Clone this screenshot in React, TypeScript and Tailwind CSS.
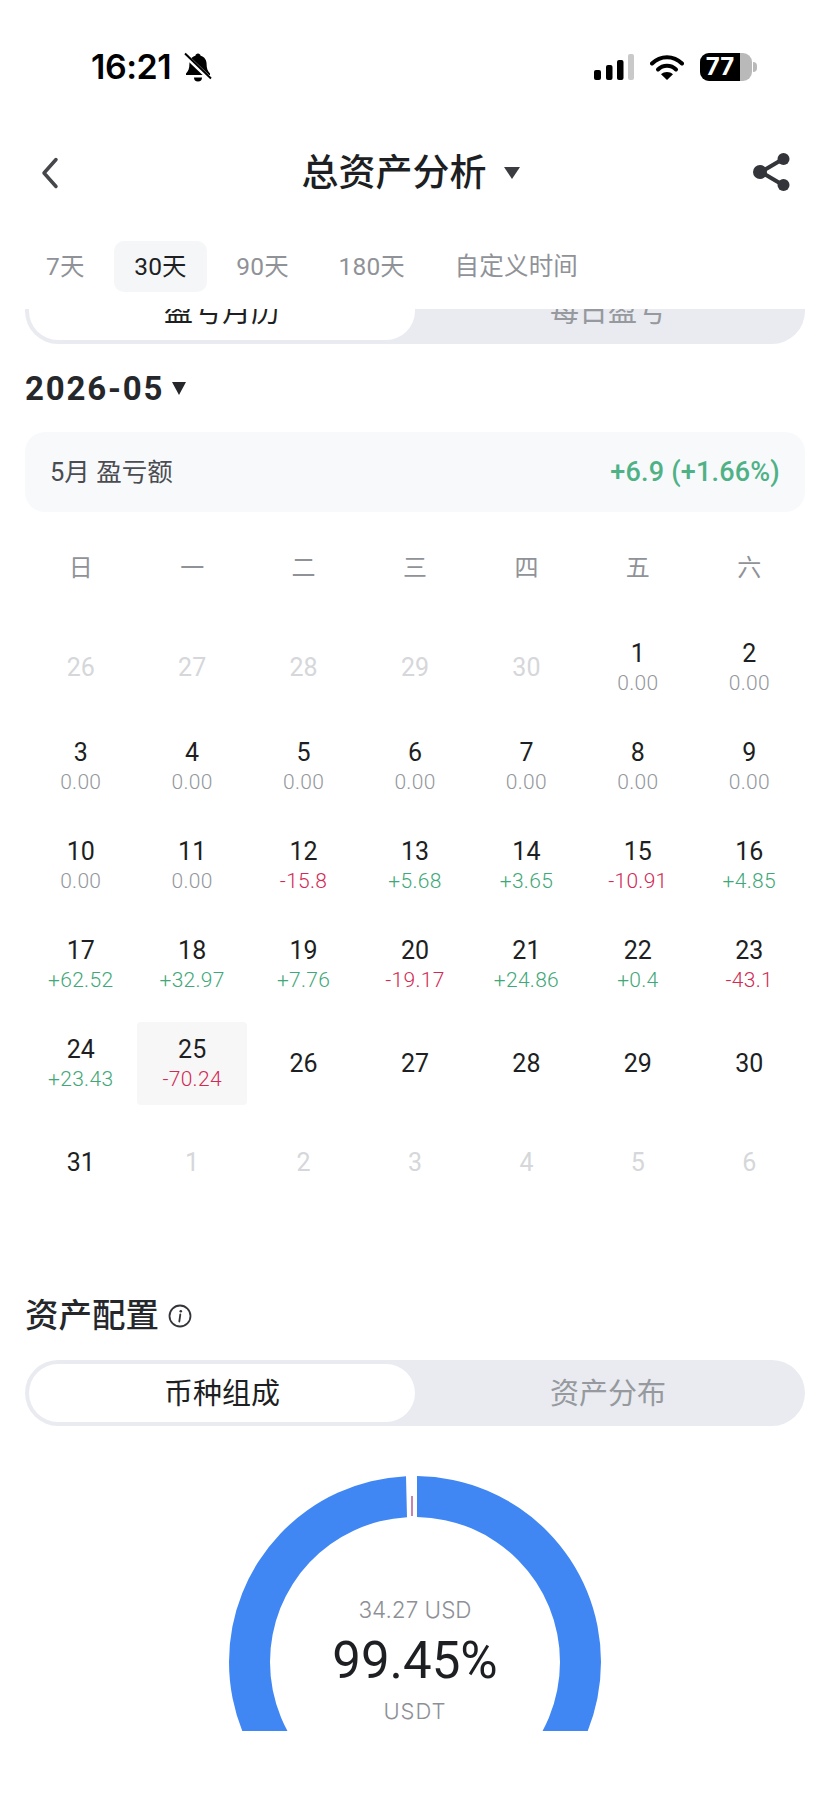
const FONT = "font-['Roboto','Noto_Sans_CJK_SC',sans-serif]";

type Day = { d: number; v?: string; muted?: boolean; today?: boolean };

const zero = (d: number): Day => ({ d, v: '0.00' });

const days: Day[] = [
  { d: 26, muted: true },
  { d: 27, muted: true },
  { d: 28, muted: true },
  { d: 29, muted: true },
  { d: 30, muted: true },
  ...[1, 2, 3, 4, 5, 6, 7, 8, 9, 10, 11].map(zero),
  { d: 12, v: '-15.8' },
  { d: 13, v: '+5.68' },
  { d: 14, v: '+3.65' },
  { d: 15, v: '-10.91' },
  { d: 16, v: '+4.85' },
  { d: 17, v: '+62.52' },
  { d: 18, v: '+32.97' },
  { d: 19, v: '+7.76' },
  { d: 20, v: '-19.17' },
  { d: 21, v: '+24.86' },
  { d: 22, v: '+0.4' },
  { d: 23, v: '-43.1' },
  { d: 24, v: '+23.43' },
  { d: 25, v: '-70.24', today: true },
  { d: 26 },
  { d: 27 },
  { d: 28 },
  { d: 29 },
  { d: 30 },
  { d: 31 },
  { d: 1, muted: true },
  { d: 2, muted: true },
  { d: 3, muted: true },
  { d: 4, muted: true },
  { d: 5, muted: true },
  { d: 6, muted: true },
];

function valueColor(v: string) {
  if (v.startsWith('+')) return 'text-[#3fa878]';
  if (v.startsWith('-')) return 'text-[#d22a54]';
  return 'text-[#94979c]';
}

function StatusBar() {
  return (
    <div className="h-[134px] flex items-center pl-[91px] pr-[73px]">
      <span className="text-[34px] leading-none font-semibold text-black font-['Inter',sans-serif] tracking-[-0.5px]">
        16:21
      </span>
      <svg width="28" height="30" viewBox="0 0 28 30" className="ml-[13px]">
        <path d="M14 1.500c1.400 0 2.400 1 2.600 2.200 4 1.100 6 4.500 6 8.600 0 4.200 1 6.400 3.400 9.200v1.500H2v-1.500c2.400-2.800 3.400-5 3.400-9.200 0-4.100 2-7.500 6-8.600C11.600 2.500 12.600 1.500 14 1.500z" fill="#000" />
        <path d="M10 25.500h8a4 4 0 0 1-8 0z" fill="#000" />
        <path d="M1 3l26 25" stroke="#fff" strokeWidth="4.500" />
        <path d="M1 1.500l26 25" stroke="#000" strokeWidth="2" />
      </svg>
      <div className="ml-auto flex items-center">
        <svg width="40" height="26" viewBox="0 0 40 26">
          <rect x="0" y="16" width="7" height="10" rx="2" fill="#000" />
          <rect x="12" y="11" width="6.500" height="15" rx="2" fill="#000" />
          <rect x="23" y="6" width="6.500" height="20" rx="2" fill="#000" />
          <rect x="34" y="0" width="6" height="26" rx="2" fill="#c9c9c9" />
        </svg>
        <svg width="34" height="26" viewBox="0 0 34 26" className="ml-[16px]">
          <path d="M2 9.500C10.500 1 23.500 1 32 9.500" fill="none" stroke="#000" strokeWidth="4" strokeLinecap="round" />
          <path d="M8 15.500c5-5 13-5 18 0" fill="none" stroke="#000" strokeWidth="4" strokeLinecap="round" />
          <path d="M17 26l-6-5.800c3.400-3 8.600-3 12 0z" fill="#000" />
        </svg>
        <div className="ml-[16px] flex items-center">
          <div className="relative w-[52px] h-[28px] rounded-[9px] overflow-hidden bg-[#b9b9b9]">
            <div className="w-[40px] h-full bg-black flex items-center justify-center">
              <span className="text-[24px] leading-none font-bold text-white font-['Inter',sans-serif]">77</span>
            </div>
          </div>
          <div className="ml-[1px] w-[4px] h-[10px] rounded-r-full bg-[#b9b9b9]" />
        </div>
      </div>
    </div>
  );
}

function NavBar() {
  return (
    <div className="relative h-[76px] flex items-center justify-center">
      <svg width="18" height="32" viewBox="0 0 18 32" className="absolute left-[41px] top-[23px]">
        <path d="M15 2.500L3 16l12 13.500" fill="none" stroke="#45474b" strokeWidth="3.500" strokeLinecap="round" strokeLinejoin="round" />
      </svg>
      <div className="flex items-center pt-[2px] pr-[9px]">
        <span className="text-[37px] leading-none font-medium text-[#1d1f23]">总资产分析</span>
        <span className="ml-[17px] w-0 h-0 border-x-[8.500px] border-x-transparent border-t-[12px] border-t-[#3a3c40]" />
      </div>
      <svg width="40" height="40" viewBox="0 0 40 40" className="absolute left-[752px] top-[18px]">
        <path d="M31 7L9 20l22 13" fill="none" stroke="#33353a" strokeWidth="4" />
        <circle cx="31.500" cy="7" r="6" fill="#33353a" />
        <circle cx="8" cy="20" r="7" fill="#33353a" />
        <circle cx="31.500" cy="33" r="6" fill="#33353a" />
      </svg>
    </div>
  );
}

function RangeTabs() {
  const tabs = ['7天', '30天', '90天', '180天', '自定义时间'];
  return (
    <div className="mt-[31px] h-[51px] flex pl-[26px] gap-[9.500px]">
      {tabs.map((t) => (
        <div
          key={t}
          className={`h-full px-[20px] pt-[2px] flex items-center rounded-[10px] text-[24.500px] leading-none tracking-[0.2px] ${
            t === '30天' ? 'bg-[#f5f6f8] text-[#1d1f23]' : 'text-[#8f9297]'
          }`}
        >
          {t}
        </div>
      ))}
    </div>
  );
}

function Segmented({ left, right }: { left: string; right: string }) {
  return (
    <div className="h-[66px] rounded-full bg-[#e9ebf0] p-[4px] flex">
      <div className="w-[386px] pt-[3px] rounded-full bg-white flex items-center justify-center text-[29px] text-[#1d1f23]">
        {left}
      </div>
      <div className="flex-1 pt-[3px] flex items-center justify-center text-[29px] text-[#96999e]">{right}</div>
    </div>
  );
}

function Calendar() {
  return (
    <>
      <div className="mt-[36px] h-[40px] grid grid-cols-7 items-center text-center text-[24px] text-[#8f9297]">
        {['日', '一', '二', '三', '四', '五', '六'].map((w) => (
          <div key={w}>{w}</div>
        ))}
      </div>
      <div className="mt-[38px] grid grid-cols-7 auto-rows-[83px] gap-y-[16px]">
        {days.map((day, i) => (
          <div
            key={i}
            className={`flex flex-col items-center justify-center ${day.today ? 'bg-[#f7f7f8] rounded-[4px] mx-[1px]' : ''}`}
          >
            <div className={`text-[25px] leading-[30px] ${day.muted ? 'text-[#d5d7da]' : 'text-[#1d1f23]'}`}>{day.d}</div>
            {day.v && (
              <div className={`mt-[1px] mb-[1px] text-[21px] leading-[26px] font-light tracking-[0.3px] ${valueColor(day.v)}`}>
                {day.v}
              </div>
            )}
          </div>
        ))}
      </div>
    </>
  );
}

function Donut() {
  return (
    <div className="relative mt-[50px] h-[255px]">
      <svg width="780" height="255" viewBox="0 0 780 255" className="block">
        {/* ring centre sits at 390,186, cut off flat by the viewBox bottom */}
        <path d="M381 0.220A186 186 0 0 0 204 186A186 186 0 0 0 390 372A186 186 0 0 0 576 186A186 186 0 0 0 392 0.010V41.010A145 145 0 0 1 535 186A145 145 0 0 1 390 331A145 145 0 0 1 245 186A145 145 0 0 1 382 41.220z" fill="#4187f4" />
        <rect x="386.300" y="20" width="1.400" height="20" fill="#b0508f" />
      </svg>
      <div className="absolute left-0 right-0 top-[120px] text-center text-[22.500px] leading-[28px] text-[#8d9096] font-['Inter',sans-serif] font-light">
        34.27 USD
      </div>
      <div className="absolute left-0 right-0 top-[155px] text-center text-[51px] leading-[60px] font-[450] text-[#1d1f23]">
        99.45%
      </div>
      <div className="absolute left-0 right-0 top-[221px] text-center text-[22px] leading-[28px] tracking-[1px] text-[#8d9096] font-['Inter',sans-serif] font-light">
        USDT
      </div>
    </div>
  );
}

export default function App() {
  return (
    <div className={`w-[830px] h-[1802px] bg-white flex flex-col overflow-hidden ${FONT}`}>
      <header className="h-[309px] shrink-0 bg-white relative z-10">
        <StatusBar />
        <NavBar />
        <RangeTabs />
      </header>
      <main className="flex-1 overflow-hidden">
        {/* page is scrolled: the first switch sits partly under the header */}
        <div className="-mt-[31px] px-[25px]">
          <Segmented left="盈亏月历" right="每日盈亏" />

          <div className="mt-[24px] h-[40px] flex items-center">
            <span className="text-[33px] leading-none font-bold text-[#25272b] tracking-[1.800px]">2026-05</span>
            <span className="ml-[8px] w-0 h-0 border-x-[7.500px] border-x-transparent border-t-[13px] border-t-[#25272b]" />
          </div>

          <div className="mt-[24px] h-[80px] rounded-[20px] bg-[#f8f9fb] px-[25px] flex items-center justify-between">
            <span className="text-[25.500px] text-[#4a4c51]">5月 盈亏额</span>
            <span className="text-[27px] font-medium text-[#4fb286] tracking-[0.2px]">+6.9 (+1.66%)</span>
          </div>

          <Calendar />

          <div className="mt-[90px] h-[44px] flex items-center">
            <span className="text-[33.500px] leading-none font-medium text-[#25272b]">资产配置</span>
            <svg width="24" height="24" viewBox="0 0 24 24" className="ml-[9px]">
              <circle cx="12" cy="12" r="10.500" fill="none" stroke="#33353a" strokeWidth="1.800" />
              <circle cx="12.800" cy="7.200" r="1.300" fill="#33353a" />
              <path d="M12.300 10.500l-1 7" stroke="#33353a" strokeWidth="1.800" strokeLinecap="round" />
            </svg>
          </div>

          <div className="mt-[22px]">
            <Segmented left="币种组成" right="资产分布" />
          </div>

          <Donut />
        </div>
      </main>
    </div>
  );
}
